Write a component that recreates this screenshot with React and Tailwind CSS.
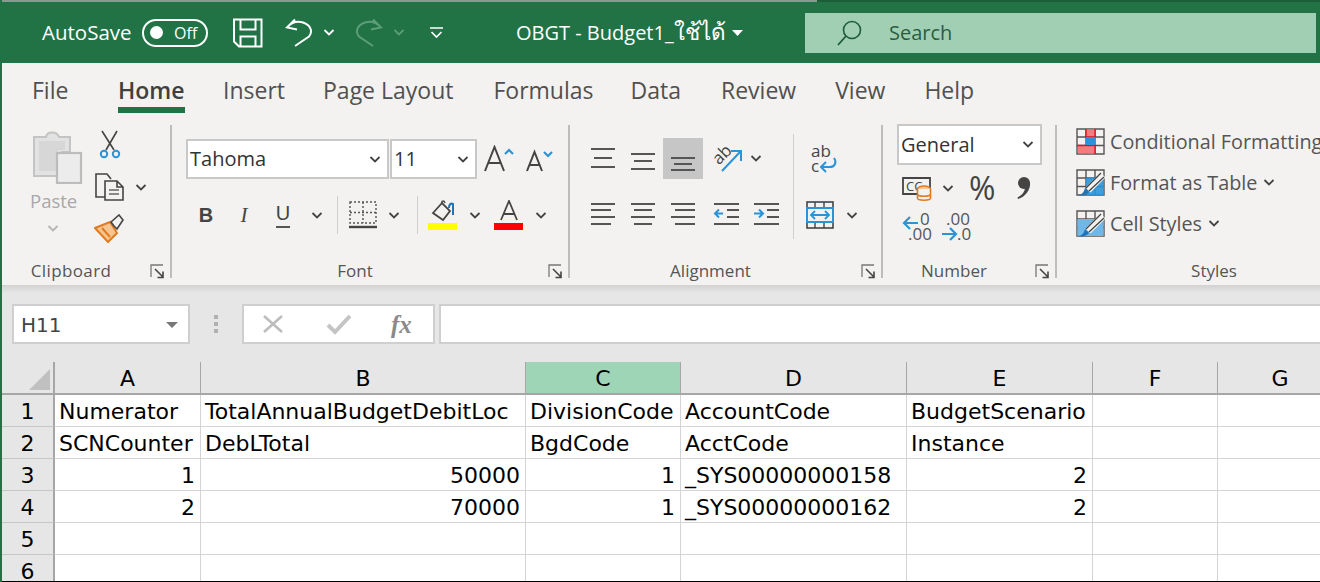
import React from "react";

const DK = "#444444";
const BLUE = "#2b93d6";
const Ch = ({ c = DK, className = "" }) => (
  <svg width="12" height="7" viewBox="0 0 12 7" className={"shrink-0 " + className}>
    <path d="M1.5 1 L6 5.5 L10.5 1" fill="none" stroke={c} strokeWidth="1.8" />
  </svg>
);
const Launcher = () => (
  <svg width="15" height="15" viewBox="0 0 15 15" className="shrink-0">
    <path d="M13 1H1V13" fill="none" stroke="#777" strokeWidth="1.3" />
    <path d="M5 5L13 13M13 7.5V13.5H7.5" fill="none" stroke="#444" strokeWidth="1.6" />
  </svg>
);
const Lines = ({ rows, w = 26, h = 26, extra }) => (
  <svg width={w} height={h} viewBox={`0 0 ${w} ${h}`} className="shrink-0">
    {rows.map(([x1, x2, y, c], i) => (
      <path key={i} d={`M${x1} ${y}H${x2}`} stroke={c || "#555"} strokeWidth="2" />
    ))}
    {extra}
  </svg>
);
const Save = () => (
  <svg width="30" height="30" viewBox="0 0 30 30" className="shrink-0">
    <path d="M1 1.5H28.5V28.5H6L1 23.5Z M7.5 1.5V11.5H22.5V1.5 M7.5 28.5V18.5H22.5V28.5" fill="none" stroke="#fff" strokeWidth="2" />
  </svg>
);
const Undo = ({ c = "#fff", flip }) => (
  <svg width="28" height="29" viewBox="0 0 28 29" className="shrink-0" style={flip ? { transform: "scaleX(-1)" } : undefined}>
    <path d="M10 1.5L2 9.5L12 11.5 M2.5 9C7 4 13 3 18 4.5C26 7 28 14 24 18.5L10 28" fill="none" stroke={c} strokeWidth="2" />
  </svg>
);

const Group = ({ w, label, labelClass = "", launcher = true, children }) => (
  <div className="flex shrink-0" style={{ width: w }}>
    <div className="flex min-w-0 flex-1 flex-col">
      <div className="flex-1">{children}</div>
      <div className="mb-[2px] flex h-[24px] items-center">
        <span className={`flex-1 text-center text-[17px] leading-[20px] text-[#555] ${labelClass}`}>{label}</span>
        {launcher && (
          <span className="mr-[5px] ml-[10px] flex">
            <Launcher />
          </span>
        )}
      </div>
    </div>
    {launcher && <div className="mt-[10px] h-[153px] w-[2px] shrink-0 bg-[#bdbdbd]" />}
  </div>
);

const SelectBox = ({ text, w, h = "h-[41px]" }) => (
  <div className={`flex ${h} shrink-0 items-center justify-between border-2 border-[#c8c8c8] bg-white pr-[2px] pl-[2px] text-[#333]`} style={{ width: w }}>
    <span className="text-[20px] leading-none">{text}</span>
    <Ch className="mr-[4px]" />
  </div>
);

const Clipboard = () => (
  <div className="flex pl-[28px]">
    <div className="flex w-[64px] flex-col pt-[15px]">
      <svg width="52" height="54" viewBox="0 0 52 54" className="ml-[2px]">
        <path d="M2 7H14C15 1 25 1 27 7H38V22H30V46H2Z" fill="#e2e2e2" stroke="#c4c4c4" strokeWidth="2" />
        <path d="M7 11H33V20H26V41H7Z" fill="#d7d7d7" />
        <rect x="25" y="23" width="24" height="30" fill="#ececec" stroke="#bcbcbc" strokeWidth="2.2" />
      </svg>
      <span className="mt-[4px] text-[18.5px] leading-[26px] text-[#a8a8a8]">Paste</span>
      <Ch c="#b5b5b5" className="mt-[11px] ml-[17px]" />
    </div>
    <div className="flex flex-col pt-[15px]">
      <svg width="22" height="29" viewBox="0 0 22 29" className="ml-[5px]">
        <path d="M3 1L15 20M18 1L7 20" stroke="#444" strokeWidth="1.6" fill="none" />
        <circle cx="5" cy="24" r="3.2" fill="none" stroke={BLUE} strokeWidth="2" />
        <circle cx="17" cy="24" r="3.2" fill="none" stroke={BLUE} strokeWidth="2" />
      </svg>
      <div className="mt-[13px] flex items-center">
        <svg width="31" height="30" viewBox="0 0 31 30" className="shrink-0">
          <path d="M11 25H2V2H13L17 7" fill="none" stroke="#444" strokeWidth="1.6" />
          <path d="M11 9H23L29 15V28H11Z M23 9V15H29" fill="#f3f2f1" stroke="#444" strokeWidth="1.6" />
          <path d="M15 18H25M15 22H25" stroke="#666" strokeWidth="1.5" />
        </svg>
        <Ch className="ml-[10px]" />
      </div>
      <svg width="30" height="29" viewBox="0 0 30 29" className="mt-[12px]">
        <path d="M1 14L16 8L23 19L14 28Z" fill="#f6c48f" stroke="#e07b20" strokeWidth="2" />
        <path d="M8 14L16 23" stroke="#e07b20" strokeWidth="2" />
        <path d="M17 8L20 12L23 15L29 6L25 1Z" fill="#f3f2f1" stroke="#444" strokeWidth="1.6" />
      </svg>
    </div>
  </div>
);

const Font = () => (
  <div className="flex flex-col pl-[14px]">
    <div className="mt-[24px] flex h-[40px] items-center">
      <SelectBox text="Tahoma" w={203} h="h-[40px]" />
      <div className="ml-[1px]">
        <SelectBox text="11" w={87} h="h-[40px]" />
      </div>
      <svg width="32" height="28" viewBox="0 0 32 28" className="ml-[7px]">
        <path d="M1 26L10.5 2L20 26M4.5 18H16.5" fill="none" stroke="#444" strokeWidth="2" />
        <path d="M21 9L25 5L29 9" fill="none" stroke={BLUE} strokeWidth="2.2" />
      </svg>
      <svg width="28" height="24" viewBox="0 0 28 24" className="mt-[4px] ml-[10px]">
        <path d="M1 22L8.5 3L16 22M3.5 16H13.5" fill="none" stroke="#444" strokeWidth="2" />
        <path d="M18 3L22 7L26 3" fill="none" stroke={BLUE} strokeWidth="2.2" />
      </svg>
    </div>
    <div className="mt-[17px] flex h-[38px] items-center text-[#444]">
      <span className="ml-[12px] w-[16px] text-center text-[20px] leading-none font-bold [font-family:'Liberation_Sans',sans-serif]">B</span>
      <span className="ml-[24px] w-[12px] text-center text-[21px] leading-none italic [font-family:'Liberation_Serif',serif]">I</span>
      <span className="ml-[26px] flex w-[14px] flex-col items-center border-b-2 border-[#555] pb-[2px] text-[20px] leading-[21px] [font-family:'Liberation_Sans',sans-serif]">U</span>
      <Ch className="ml-[21px]" />
      <div className="ml-[14px] h-[38px] w-[1px] bg-[#cfcfcf]" />
      <svg width="28" height="28" viewBox="0 0 28 28" className="ml-[11px]">
        <path d="M1 1H27V22H1ZM14 1V22M1 11.5H27" fill="none" stroke="#555" strokeWidth="1.4" strokeDasharray="2 2" />
        <path d="M0 26H28" stroke="#444" strokeWidth="2.4" />
      </svg>
      <Ch className="ml-[11px]" />
      <div className="ml-[17px] h-[38px] w-[1px] bg-[#cfcfcf]" />
      <div className="ml-[10px] flex w-[29px] flex-col items-center">
        <svg width="24" height="22" viewBox="0 0 24 22">
          <path d="M2 13L11 3L19 11L12 20Z" fill="none" stroke="#444" strokeWidth="1.8" />
          <path d="M11 3C10 1 13 0 14 3" fill="none" stroke="#444" strokeWidth="1.5" />
          <path d="M18 8C18 4 20 3 22 4V15" fill="none" stroke="#2073b5" strokeWidth="2" />
        </svg>
        <div className="mt-[1px] h-[7px] w-[29px] bg-[#ffff00]" />
      </div>
      <Ch className="ml-[12px]" />
      <div className="ml-[13px] flex w-[29px] flex-col items-center">
        <svg width="20" height="22" viewBox="0 0 20 22">
          <path d="M2 20L10 1L18 20M5 14H15" fill="none" stroke="#444" strokeWidth="1.8" />
        </svg>
        <div className="mt-[1px] h-[7px] w-[29px] bg-[#ff0000]" />
      </div>
      <Ch className="ml-[12px]" />
    </div>
  </div>
);

const Cell = ({ active, children }) => (
  <div className={`flex h-[41px] w-[40px] shrink-0 items-center justify-center ${active ? "bg-[#c6c6c6]" : ""}`}>{children}</div>
);

const Alignment = () => (
  <div className="flex pl-[13px]">
    <div className="flex w-[210px] flex-col">
      <div className="mt-[23px] flex items-center">
        <Cell><Lines rows={[[1, 25, 3], [4, 22, 12], [1, 25, 21]]} /></Cell>
        <Cell><Lines rows={[[1, 25, 8], [4, 22, 15], [1, 25, 23]]} /></Cell>
        <Cell active><Lines rows={[[1, 25, 12], [4, 22, 18], [1, 25, 24]]} /></Cell>
        <svg width="31" height="29" viewBox="0 0 31 29" className="ml-[9px] overflow-visible">
          <text x="0" y="17" transform="rotate(-45 9 11)" fontSize="17" fill="#444" fontFamily="Open Sans">ab</text>
          <path d="M10 27L28 8M19 7H29V17" fill="none" stroke={BLUE} strokeWidth="2" />
        </svg>
        <Ch className="ml-[7px]" />
      </div>
      <div className="mt-[14px] flex items-center">
        <Cell><Lines rows={[[1, 25, 3], [1, 21, 9], [1, 25, 16], [1, 21, 23]]} /></Cell>
        <Cell><Lines rows={[[1, 25, 3], [4, 22, 9], [1, 25, 16], [4, 22, 23]]} /></Cell>
        <Cell><Lines rows={[[1, 25, 3], [5, 25, 9], [1, 25, 16], [5, 25, 23]]} /></Cell>
        <div className="ml-[3px] flex">
          <Cell>
            <Lines rows={[[1, 26, 3], [14, 26, 9], [14, 26, 16], [1, 26, 23]]} extra={<path d="M10 12.5H2M6 8.5L2 12.5L6 16.5" fill="none" stroke={BLUE} strokeWidth="2" />} />
          </Cell>
          <Cell>
            <Lines rows={[[1, 26, 3], [14, 26, 9], [14, 26, 16], [1, 26, 23]]} extra={<path d="M1 12.5H10M6 8.5L10 12.5L6 16.5" fill="none" stroke={BLUE} strokeWidth="2" />} />
          </Cell>
        </div>
      </div>
    </div>
    <div className="mt-[19px] h-[105px] w-[1px] bg-[#cfcfcf]" />
    <div className="flex flex-col pl-[12px]">
      <svg width="30" height="30" viewBox="0 0 30 30" className="mt-[29px] ml-[4px] overflow-visible">
        <text x="1" y="13" fontSize="17" fill="#444" fontFamily="Open Sans">ab</text>
        <text x="1" y="28" fontSize="17" fill="#444" fontFamily="Open Sans">c</text>
        <path d="M24 14C27 18 25 23 20 23H12M16 18L11 23L16 28" fill="none" stroke={BLUE} strokeWidth="2" />
      </svg>
      <div className="mt-[27px] flex items-center">
        <svg width="28" height="28" viewBox="0 0 28 28">
          <rect x="1" y="1" width="26" height="26" fill="none" stroke="#444" strokeWidth="1.6" />
          <path d="M9 1V7M18 1V7M9 21V27M18 21V27" stroke="#444" strokeWidth="1.4" />
          <rect x="1" y="7" width="26" height="14" fill="#f3f2f1" stroke={BLUE} strokeWidth="2" />
          <path d="M5 14H23M9 10L5 14L9 18M19 10L23 14L19 18" fill="none" stroke={BLUE} strokeWidth="1.8" />
        </svg>
        <Ch className="ml-[12px]" />
      </div>
    </div>
  </div>
);

const NumberGroup = () => (
  <div className="flex flex-col pl-[14px]">
    <div className="mt-[9px]">
      <SelectBox text="General" w={145} />
    </div>
    <div className="mt-[8px] flex h-[30px] items-center pl-[5px]">
      <svg width="30" height="26" viewBox="0 0 30 26" className="shrink-0 overflow-visible">
        <path d="M1 3H28V19H1Z" fill="none" stroke="#444" strokeWidth="1.8" />
        <text x="4" y="16" fontSize="13" fill="#444" fontFamily="Open Sans">CC</text>
        <ellipse cx="22" cy="14" rx="6.5" ry="3" fill="#f4c79a" stroke="#e07b20" strokeWidth="1.6" />
        <path d="M15.5 14V23C15.5 26 28.5 26 28.5 23V14M15.5 19C16 22 28 22 28.5 19" fill="#f3f2f1" stroke="#e07b20" strokeWidth="1.6" />
      </svg>
      <Ch className="ml-[10px]" />
      <span className="ml-[15px] w-[28px] text-[32px] leading-none text-[#444]">%</span>
      <svg width="15" height="24" viewBox="0 0 15 24" className="ml-[19px] shrink-0">
        <circle cx="8" cy="7" r="6" fill="#444" />
        <path d="M14 6C15 14 9 21 2 23L1.5 21.5C6 19 9 16 9 11Z" fill="#444" />
      </svg>
    </div>
    <div className="mt-[8px] flex items-center pl-[5px]">
      <svg width="30" height="30" viewBox="0 0 30 30" className="overflow-visible">
        <path d="M16 12H2M8 6L2 12L8 18" fill="none" stroke={BLUE} strokeWidth="2.2" />
        <text x="18" y="14" fontSize="17" fill="#555" fontFamily="Open Sans">0</text>
        <text x="6" y="29" fontSize="17" fill="#555" fontFamily="Open Sans">.00</text>
      </svg>
      <svg width="30" height="30" viewBox="0 0 30 30" className="ml-[9px] overflow-visible">
        <text x="5" y="14" fontSize="17" fill="#555" fontFamily="Open Sans">.00</text>
        <path d="M1 23H15M9 17L15 23L9 29" fill="none" stroke={BLUE} strokeWidth="2.2" />
        <text x="16" y="29" fontSize="17" fill="#555" fontFamily="Open Sans">.0</text>
      </svg>
    </div>
  </div>
);

const GridIcon = ({ children }) => (
  <svg width="29" height="27" viewBox="0 0 29 27" className="shrink-0">
    <path d="M1 1H28V26H1ZM1 9H28M1 17.5H28M10 1V26M19 1V26" fill="none" stroke="#555" strokeWidth="1.4" />
    {children}
  </svg>
);
const Brush = () => (
  <>
    <path d="M27 6L12 21" stroke="#f3f2f1" strokeWidth="7" />
    <path d="M25 4L10 19M28 8L13 22" stroke="#444" strokeWidth="1.3" fill="none" />
    <path d="M2 26C6 26 8 23 9 19L13 23C11 26 6 27 2 26Z" fill="#2073b5" />
  </>
);

const StyleRow = ({ icon, text, chev }) => (
  <div className="flex h-[41px] items-center whitespace-nowrap">
    {icon}
    <span className="ml-[5px] text-[19.8px] leading-none text-[#555]">{text}</span>
    {chev && <Ch className="ml-[6px]" />}
  </div>
);

const Styles = () => (
  <div className="flex flex-col pt-[6px] pl-[19px]">
    <StyleRow
      text="Conditional Formatting"
      icon={
        <GridIcon>
          <rect x="10" y="1.5" width="9" height="7" fill="#f47c80" />
          <rect x="10" y="18" width="9" height="7.5" fill="#f47c80" />
          <rect x="2" y="18" width="8" height="7.5" fill="#f47c80" />
          <path d="M10 1V9H19V1M1.5 17.5H19V26" fill="none" stroke="#e0141c" strokeWidth="1.4" />
          <rect x="10" y="9" width="9" height="8" fill={BLUE} />
        </GridIcon>
      }
    />
    <StyleRow
      text="Format as Table"
      chev
      icon={
        <GridIcon>
          <rect x="10" y="9" width="18" height="17" fill={BLUE} opacity="0.9" />
          <Brush />
        </GridIcon>
      }
    />
    <StyleRow
      text="Cell Styles"
      chev
      icon={
        <GridIcon>
          <rect x="1.5" y="9" width="26" height="17" fill="#6fb7e8" />
          <Brush />
        </GridIcon>
      }
    />
  </div>
);

const TABS = [
  ["Insert", "mr-[38px]"],
  ["Page Layout", "mr-[40px]"],
  ["Formulas", "mr-[37px]"],
  ["Data", "mr-[40px]"],
  ["Review", "mr-[39px]"],
  ["View", "mr-[39px]"],
  ["Help", ""],
];

const Tabs = () => (
  <div className="flex h-[52px] shrink-0 items-start pl-[30px]">
    <div className="mt-[12px] mr-[51px] w-[35px] text-[23px] leading-[31px] text-[#505050]">File</div>
    <div className="mt-[12px] mr-[38px] flex w-[67px] flex-col">
      <span className="text-[23px] leading-[31px] font-semibold text-[#404040]">Home</span>
      <span className="mt-[1px] h-[6px] bg-[#217346]" />
    </div>
    {TABS.map(([t, m]) => (
      <div key={t} className={`mt-[12px] ${m} text-[23px] leading-[31px] whitespace-nowrap text-[#505050]`}>{t}</div>
    ))}
  </div>
);

const COLS = [
  ["A", ""],
  ["B", ""],
  ["C", "sel"],
  ["D", ""],
  ["E", ""],
  ["F", ""],
  ["G", ""],
];
const ROWS = [
  ["Numerator", "TotalAnnualBudgetDebitLoc", "DivisionCode", "AccountCode", "BudgetScenario", "", ""],
  ["SCNCounter", "DebLTotal", "BgdCode", "AcctCode", "Instance", "", ""],
  [1, 50000, 1, "_SYS00000000158", 2, "", ""],
  [2, 70000, 1, "_SYS00000000162", 2, "", ""],
  ["", "", "", "", "", "", ""],
  ["", "", "", "", "", "", ""],
];

const Sheet = () => (
  <div className="grid min-h-0 flex-1 auto-rows-[32px] grid-cols-[53px_146px_325px_155px_226px_186px_125px_125px] grid-rows-[33px] overflow-hidden bg-white text-[22px] leading-none text-black [font-family:'DejaVu_Sans',sans-serif]">
    <div className="flex items-end justify-end border-r-2 border-b-2 border-[#a6a6a6] bg-[#e6e6e6] pr-[2px] pb-[2px]">
      <svg width="22" height="22" viewBox="0 0 22 22"><path d="M21 0V21H0Z" fill="#c0c0c0" /></svg>
    </div>
    {COLS.map(([c, s]) => (
      <div key={c} className={`flex items-center justify-center border-r border-b-2 border-[#a6a6a6] pt-[3px] ${s ? "bg-[#9fd5b7]" : "bg-[#e6e6e6]"}`}>{c}</div>
    ))}
    {ROWS.map((row, i) => (
      <React.Fragment key={i}>
        <div className="flex items-center justify-center border-r-2 border-b border-[#a6a6a6] border-b-[#c6c6c6] bg-[#e6e6e6] pt-[2px]">{i + 1}</div>
        {row.map((v, j) => (
          <div key={j} className={`flex items-center overflow-hidden border-r border-b border-[#d4d4d4] pt-[2px] pr-[5px] pl-[4px] whitespace-nowrap ${typeof v === "number" ? "justify-end" : ""}`}>{v}</div>
        ))}
      </React.Fragment>
    ))}
  </div>
);

export default function App() {
  return (
    <div className="flex h-[582px] w-[1320px] flex-col overflow-hidden border-l-2 border-[#217346] bg-white [font-family:'Open_Sans','Noto_Sans',sans-serif]">
      <div className="flex h-[2px] shrink-0">
        <div className="h-full w-[815px] bg-[#8a9a90]" />
        <div className="h-full flex-1 bg-[#1c5e3a]" />
      </div>
      <header className="flex h-[61px] shrink-0 items-center bg-[#217346] pl-[40px] text-white">
        <span className="w-[89px] text-[20.5px] whitespace-nowrap">AutoSave</span>
        <div className="ml-[11px] flex h-[28px] w-[66px] items-center rounded-full border-2 border-white pl-[6px]">
          <span className="h-[13px] w-[13px] rounded-full bg-white" />
          <span className="ml-[11px] text-[16px] leading-none">Off</span>
        </div>
        <span className="ml-[25px] flex"><Save /></span>
        <span className="ml-[22px] flex"><Undo /></span>
        <Ch c="#fff" className="ml-[10px]" />
        <span className="ml-[20px] flex"><Undo c="#5d9d79" flip /></span>
        <Ch c="#5d9d79" className="ml-[10px]" />
        <svg width="15" height="11" viewBox="0 0 15 11" className="ml-[24px] shrink-0">
          <path d="M1 1H14M2.5 5L7.5 10L12.5 5" fill="none" stroke="#fff" strokeWidth="1.7" />
        </svg>
        <span className="ml-[72px] w-[205px] text-[20px] whitespace-nowrap">OBGT - Budget1_<span className="text-[22.5px] leading-none">ใช้ได้</span></span>
        <svg width="11" height="6" viewBox="0 0 11 6" className="ml-[11px] shrink-0"><path d="M0 0H11L5.5 6Z" fill="#fff" /></svg>
        <div className="ml-[62px] flex h-[40px] w-[511px] shrink-0 items-center bg-[#a0cfb3] pl-[32px] text-[#2a5d40]">
          <svg width="26" height="26" viewBox="0 0 26 26" className="shrink-0">
            <circle cx="15" cy="10" r="8.5" fill="none" stroke="#1e5c3a" strokeWidth="1.6" />
            <path d="M9 16L1 25" stroke="#1e5c3a" strokeWidth="1.8" />
          </svg>
          <span className="ml-[26px] text-[20px]">Search</span>
        </div>
      </header>
      <section className="flex h-[222px] shrink-0 flex-col bg-[#f3f2f1]">
        <Tabs />
        <div className="flex flex-1 overflow-hidden">
          <Group w={170} label="Clipboard" labelClass="tracking-[0.4px]"><Clipboard /></Group>
          <Group w={398} label="Font"><Font /></Group>
          <Group w={313} label="Alignment"><Alignment /></Group>
          <Group w={174} label="Number"><NumberGroup /></Group>
          <Group w={314} label="Styles" launcher={false}><Styles /></Group>
        </div>
      </section>
      <section className="flex h-[77px] shrink-0 flex-col bg-[#e6e6e6]">
        <div className="h-[8px] shrink-0 bg-gradient-to-b from-[#d2d2d2] to-[#e6e6e6]" />
        <div className="mt-[11px] flex h-[40px] items-stretch">
          <div className="ml-[10px] flex w-[178px] items-center justify-between border-2 border-[#cfcfcf] bg-white pt-[1px] pr-[10px] pl-[7px] text-[20px] text-[#444] [font-family:'DejaVu_Sans',sans-serif]">
            <span>H11</span>
            <svg width="12" height="6" viewBox="0 0 12 6"><path d="M0 0H12L6 6Z" fill="#777" /></svg>
          </div>
          <div className="flex w-[52px] flex-col items-center justify-center gap-[3px]">
            <span className="h-[4px] w-[4px] bg-[#b0b0b0]" />
            <span className="h-[4px] w-[4px] bg-[#b0b0b0]" />
            <span className="h-[4px] w-[4px] bg-[#b0b0b0]" />
          </div>
          <div className="flex w-[193px] items-center border-2 border-[#cfcfcf] bg-white pl-[18px]">
            <svg width="22" height="20" viewBox="0 0 22 20" className="shrink-0"><path d="M2 2L20 18M20 2L2 18" stroke="#bdbdbd" strokeWidth="2.6" fill="none" /></svg>
            <svg width="26" height="22" viewBox="0 0 26 22" className="ml-[42px] shrink-0"><path d="M2 12L9 19L24 3" stroke="#c4c4c4" strokeWidth="4" fill="none" /></svg>
            <span className="ml-[39px] text-[25px] leading-none font-bold text-[#8a8a8a] italic [font-family:'Liberation_Serif',serif]">fx</span>
          </div>
          <div className="ml-[4px] flex-1 border-2 border-r-0 border-[#cfcfcf] bg-white" />
        </div>
      </section>
      <Sheet />
      <div className="h-[1px] shrink-0 bg-black" />
    </div>
  );
}
